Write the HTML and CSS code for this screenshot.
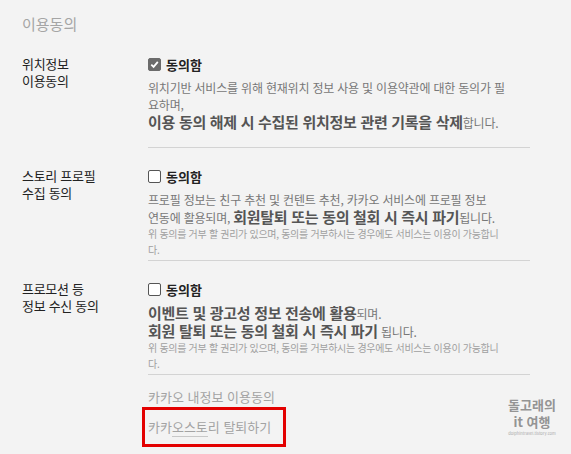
FILE: index.html
```html
<!DOCTYPE html>
<html lang="ko">
<head>
  <meta charset="UTF-8" />
  <meta name="viewport" content="width=device-width, initial-scale=1.0"/>
  <title>이용동의</title>
  <link rel="stylesheet" href="styles.css">
</head>
<body>
<div class="page">
  <h2 class="page-title">이용동의</h2>

  <!-- 위치정보 -->
  <div class="agree-row">
    <div class="agree-label">위치정보<br>이용동의</div>
    <div class="agree-body first">
      <label class="agree-check">
        <span class="box checked">
          <svg width="9" height="9" viewBox="0 0 9 9"><path d="M1.3 4.6 L3.6 6.9 L7.8 1.9" fill="none" stroke="#fff" stroke-width="1.8"/></svg>
        </span>
        동의함
      </label>
      <p class="agree-desc">위치기반 서비스를 위해 현재위치 정보 사용 및 이용약관에 대한 동의가 필<br>요하며,<br><strong>이용 동의 해제 시 수집된 위치정보 관련 기록을 삭제</strong>합니다.</p>
    </div>
  </div>

  <!-- 스토리 프로필 -->
  <div class="agree-row">
    <div class="agree-label">스토리 프로필<br>수집 동의</div>
    <div class="agree-body">
      <label class="agree-check"><span class="box"></span>동의함</label>
      <p class="agree-desc">프로필 정보는 친구 추천 및 컨텐트 추천, 카카오 서비스에 프로필 정보<br>연동에 활용되며, <strong>회원탈퇴 또는 동의 철회 시 즉시 파기</strong>됩니다.</p>
      <p class="agree-note">위 동의를 거부 할 권리가 있으며, 동의를 거부하시는 경우에도 서비스는 이용이 가능합니<br>다.</p>
    </div>
  </div>

  <!-- 프로모션 -->
  <div class="agree-row">
    <div class="agree-label">프로모션 등<br>정보 수신 동의</div>
    <div class="agree-body">
      <label class="agree-check"><span class="box"></span>동의함</label>
      <p class="agree-desc"><strong>이벤트 및 광고성 정보 전송에 활용</strong>되며.<br><strong>회원 탈퇴 또는 동의 철회 시 즉시 파기</strong> 됩니다.</p>
      <p class="agree-note">위 동의를 거부 할 권리가 있으며, 동의를 거부하시는 경우에도 서비스는 이용이 가능합니<br>다.</p>
    </div>
  </div>

  <div class="links">
    <a class="link">카카오 내정보 이용동의</a>
    <a class="link marked">카카<span class="hover-line">오스토</span>리 탈퇴하기</a>
  </div>

  <div class="watermark">
    <div>돌고래의</div>
    <div>it 여행</div>
    <div class="watermark-url">dolphintravel.tistory.com</div>
  </div>
</div>
</body>
</html>
```

FILE: styles.css
```css
body {
  margin: 0;
  background: #f3f3f3;
  font-family: "Noto Sans CJK KR", "Noto Sans", sans-serif;
  color: #333;
}
.page {
  position: relative;
  width: 571px;
  height: 454px;
  overflow: hidden;
}
.page-title {
  margin: 0;
  padding: 15px 0 0 22px;
  font-size: 15px;
  line-height: 18px;
  font-weight: normal;
  color: #a5a5a5;
}
.agree-row {
  display: flex;
  padding-top: 19px;
}
.agree-row:first-of-type {
  padding-top: 22px;
}
.agree-label {
  width: 126px;
  padding-left: 22px;
  font-size: 13px;
  line-height: 17px;
  letter-spacing: -0.3px;
  color: #222;
}
.agree-body {
  width: 382px;
  padding-bottom: 2px;
  border-bottom: 1px solid #d3d3d3;
}
.agree-body.first {
  padding-bottom: 16px;
}
.agree-check {
  display: flex;
  align-items: center;
  gap: 5px;
  height: 18px;
  font-size: 13px;
  font-weight: bold;
  color: #222;
}
.box {
  display: inline-flex;
  align-items: center;
  justify-content: center;
  width: 11px;
  height: 11px;
  border: 1px solid #555;
  border-radius: 2px;
  background: #fff;
}
.box.checked {
  background: #6b6b6b;
  border-color: #6b6b6b;
}
.agree-desc {
  margin: 6px 0 0;
  font-size: 12px;
  line-height: 17px;
  letter-spacing: -0.2px;
  color: #777;
  white-space: nowrap;
}
.agree-desc strong {
  font-size: 15px;
  line-height: 17px;
  letter-spacing: -0.3px;
  color: #555;
}
.agree-note {
  margin: 0;
  font-size: 10px;
  line-height: 16px;
  letter-spacing: -0.3px;
  color: #a0a0a0;
  white-space: nowrap;
}
.links {
  display: flex;
  flex-direction: column;
  align-items: flex-start;
  margin-left: 142px;
  padding-top: 13px;
}
.link {
  font-size: 13px;
  line-height: 18px;
  color: #a3a3a3;
  padding: 0 6px;
}
.link.marked {
  margin-top: 1px;
  padding: 8px 12px 8px 3px;
  border: 3px solid #e30000;
}
.hover-line {
  border-bottom: 1px solid #c8c8c8;
}
.watermark {
  position: absolute;
  left: 500px;
  top: 396px;
  width: 64px;
  text-align: center;
  font-size: 13px;
  line-height: 17px;
  font-weight: bold;
  color: #949494;
}
.watermark-url {
  font-size: 4px;
  line-height: 6px;
  font-weight: normal;
  color: #aaa;
}
```
